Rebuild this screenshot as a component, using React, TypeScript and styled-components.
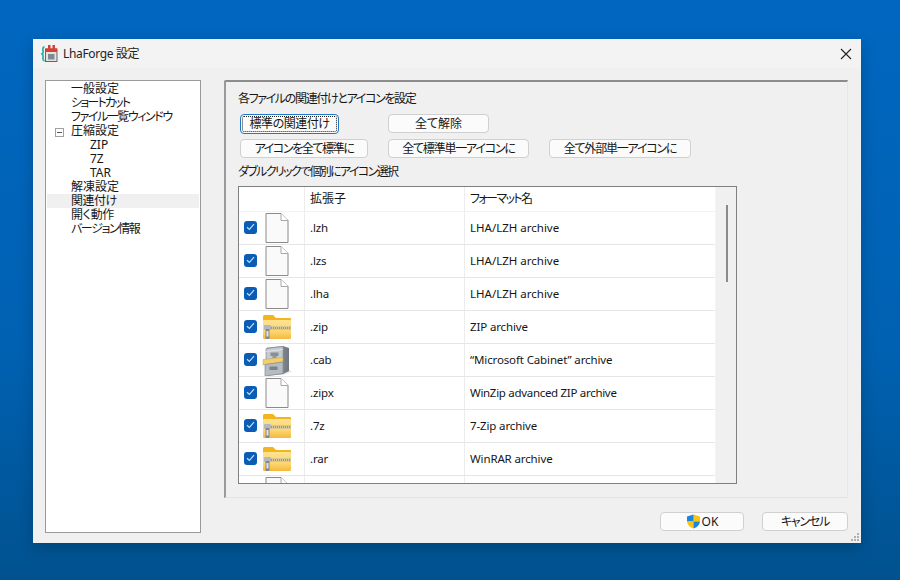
import React from "react";
import styled, { createGlobalStyle } from "styled-components";

const Global = createGlobalStyle`
  html, body { margin: 0; padding: 0; height: 100%; }
  body {
    width: 900px; height: 580px; overflow: hidden;
    font-family: "Noto Sans", "Noto Sans CJK JP", "Liberation Sans", sans-serif;
    font-size: 11px; color: #161616;
    font-feature-settings: "palt";
  }
`;

const Desktop = styled.div`
  width: 900px; height: 580px; box-sizing: border-box; padding: 39px 39px 37px 33px;
  background: linear-gradient(180deg, #0067c0 0%, #0061b2 60%, #00528f 100%);
`;
const WinWrap = styled.div`position: relative; width: 828px; height: 504px;`;
const Win = styled.div`
  width: 828px; height: 504px; background: #f0f0f0; display: flex; flex-direction: column;
  box-shadow: 0 4px 14px rgba(0,0,0,.2);
`;
const TitleBar = styled.div`
  height: 29px; flex: none; background: #f3f3f3; display: flex; align-items: center;
  padding: 0 9px 0 8px; gap: 5px; font-size: 12px;
`;
const TitleText = styled.span`flex: 1; color: #222; line-height: 29px; letter-spacing: -.35px;`;
const CloseBtn = styled.div`width: 12px; height: 12px; display: flex;`;
const Body = styled.div`
  flex: 1; display: flex; padding: 12px 13px 10px 12px; gap: 23px; min-height: 0;
`;
const Tree = styled.ul`
  width: 156px; flex: none; box-sizing: border-box; margin: 0; padding: 1px; list-style: none; background: #fff;
  border: 1px solid #9a9a9a; font-size: 12px;
`;
const TreeItem = styled.li<{ $child?: boolean; $sel?: boolean; $sp?: number }>`
  height: 14px; line-height: 14px; padding-left: ${p => (p.$child ? 43 : 24)}px;
  background: ${p => (p.$sel ? "#f0f0f0" : "transparent")};
  letter-spacing: ${p => p.$sp ?? 0}px;
  position: relative; white-space: nowrap;
`;
const Expander = styled.span`
  position: absolute; left: 8px; top: 4px; width: 7px; height: 7px; border: 1px solid #a0a0a0;
  background: #fff;
  &::after { content: ""; position: absolute; left: 1px; top: 3px; width: 5px; height: 1px; background: #555; }
`;
const Right = styled.div`flex: 1; display: flex; flex-direction: column; min-width: 0;`;
const Panel = styled.div`
  height: 418px; flex: none; box-sizing: border-box; border-top: 2px solid #8c8c8c; border-left: 2px solid #9a9a9a;
  border-right: 1px solid #e6e6e6; border-bottom: 1px solid #e3e3e3; padding: 10px 12px 0 12px;
  display: flex; flex-direction: column; border-radius: 2px 0 0 0;
`;
const Label = styled.div<{ $sp: number }>`
  height: 14px; line-height: 14px; font-size: 12px; white-space: nowrap; letter-spacing: ${p => p.$sp}px;
`;
const BtnGrid = styled.div`
  display: flex; flex-direction: column; gap: 5px; padding: 8px 0 0 2px; margin-bottom: 7px;
`;
const BtnRow = styled.div`display: flex;`;
const Btn = styled.div<{ $w: number; $gap?: number; $focus?: boolean; $sp?: number }>`
  width: ${p => p.$w}px; height: ${p => (p.$focus ? 20 : 19)}px; box-sizing: border-box; margin-left: ${p => p.$gap ?? 0}px;
  background: #fbfbfb; border: 1px solid ${p => (p.$focus ? "#1f78c8" : "#d0d0d0")};
  border-radius: 4px; font-size: 12px; display: flex; align-items: center; justify-content: center; gap: 1px;
  position: relative; white-space: nowrap; line-height: 1; letter-spacing: ${p => p.$sp ?? 0}px;
  ${p => p.$focus ? `&::after { content: ""; position: absolute; inset: 1px; border: 1px dotted #222; border-radius: 2px; }` : ""}
`;
const ListBox = styled.div`
  margin-top: 7px; height: 298px; width: 499px; box-sizing: border-box; background: #fff;
  border: 1px solid #7f7f7f; overflow: hidden; position: relative;
`;
const Row = styled.div<{ $header?: boolean }>`
  display: flex; height: ${p => (p.$header ? 25 : 33)}px; box-sizing: border-box; align-items: center;
  border-bottom: 1px solid ${p => (p.$header ? "#f2f2f2" : "#e6e6e6")};
`;
const IconCell = styled.div`
  width: 66px; flex: none; height: 100%; box-sizing: border-box; padding: 0 0 2px 5px; display: flex; align-items: center;
  border-right: 1px solid #ececec; position: relative; background: #fff;
`;
const ExtCell = styled.div`
  width: 160px; flex: none; height: 100%; box-sizing: border-box; padding: 0 0 2px 5px; display: flex; align-items: center;
  border-right: 1px solid #ececec; font-size: 11.5px; letter-spacing: -.15px;
`;
const NameCell = styled.div<{ $sp?: number; $size?: number }>`
  flex: 1; box-sizing: border-box; padding: 0 0 2px 5px; height: 100%; display: flex; align-items: center;
  font-size: ${p => p.$size ?? 11.5}px; white-space: nowrap; letter-spacing: ${p => p.$sp ?? -0.13}px;
`;
const HeadExt = styled(ExtCell)`font-size: 12px; letter-spacing: 0;`;
const Check = styled.span`
  width: 13px; height: 13px; border-radius: 3px; background: #0a5cb4; flex: none; display: flex;
  align-items: center; justify-content: center;
`;
const CheckGap = styled.span`width: 13px; flex: none;`;
const ScrollTrack = styled.div`
  position: absolute; top: 0; right: 0; bottom: 0; width: 20px; background: #f0f0f0;
  border-left: 1px solid #f4f4f4;
`;
const ScrollThumb = styled.div`
  position: absolute; left: 10px; top: 18px; width: 2px; height: 77px; background: #8a8a8a;
`;
const Footer = styled.div`
  display: flex; justify-content: flex-end; gap: 18px; padding-top: 14px;
`;
const Grip = styled.svg`position: absolute; right: 1px; bottom: 1px;`;
const Slot = styled.span`
  width: 33px; height: 33px; flex: none; margin-left: 3px; padding-top: 2px; box-sizing: border-box;
  display: flex; align-items: center; justify-content: center;
`;

const FileIcon = () => (
  <svg width="24" height="30" viewBox="0 0 24 30">
    <path d="M1 .5H16L23 7.5V29.5H1Z" fill="#fafafa" stroke="#8a8a8a" />
    <path d="M16 .5V7.5H23" fill="#fff" stroke="#a8a8a8" />
  </svg>
);
const FolderIcon = () => (
  <svg width="30" height="26" viewBox="0 0 30 26">
    <defs>
      <linearGradient id="fb" x1="0" y1="0" x2="0" y2="1">
        <stop offset="0" stopColor="#fee28f" />
        <stop offset=".6" stopColor="#fdd671" />
        <stop offset="1" stopColor="#f4b93e" />
      </linearGradient>
    </defs>
    <path d="M1 2.5a1.5 1.5 0 0 1 1.5-1.5H11l3 3H28a1 1 0 0 1 1 1V8H1Z" fill="#f3b420" />
    <rect x="1" y="6" width="28" height="19" rx="1" fill="url(#fb)" />
    <rect x="6" y="12" width="23" height="4" fill="#d9c88f" />
    <path d="M7 14H29" stroke="#8d876f" strokeWidth="1.4" strokeDasharray="1 1" />
    <rect x="2" y="11" width="7" height="5" rx="1" fill="#b4b8bc" />
    <rect x="3.5" y="15" width="4" height="10" rx="1" fill="#83878b" />
    <rect x="4.5" y="17" width="2" height="5.5" fill="#e4e4e4" />
  </svg>
);
const CabIcon = () => (
  <svg width="30" height="31" viewBox="0 0 30 31">
    <defs>
      <linearGradient id="cs" x1="0" y1="0" x2="1" y2="0">
        <stop offset="0" stopColor="#a9afb6" />
        <stop offset="1" stopColor="#6f767d" />
      </linearGradient>
    </defs>
    <path d="M27 25 30 26.5 21 30 14 29Z" fill="#e2e2e2" />
    <path d="M5 2.5 21 1 27 3V26L21 29 5 31Z" fill="url(#cs)" />
    <path d="M4 3.5 21 1.5V14L4 16Z" fill="#c5cad0" stroke="#858c93" strokeWidth=".7" />
    <path d="M4 6.5 21 4.5" stroke="#dfe3e6" />
    <rect x="8.5" y="7.5" width="8" height="3.5" fill="#868e96" />
    <rect x="10.5" y="11.5" width="4" height="1" fill="#666" />
    <path d="M1 14.5 21 12.5 21 17 1 20Z" fill="#f2cf6a" stroke="#b9a25a" strokeWidth=".5" />
    <path d="M3 19.5 21 17V28.5L3 31Z" fill="#b6bcc3" stroke="#858c93" strokeWidth=".7" />
    <rect x="7.5" y="21.5" width="8" height="3.5" fill="#7b838b" />
  </svg>
);
const Shield = () => (
  <svg width="15" height="15" viewBox="0 0 15 15">
    <path d="M7.5 0.5 14 2.5V7.5H7.5Z" fill="#f9c412" />
    <path d="M7.5 0.5 1 2.5V7.5H7.5Z" fill="#1b86dc" />
    <path d="M1 7.5H7.5V14.5C4 13.5 1.5 11 1 7.5Z" fill="#f9c412" />
    <path d="M14 7.5H7.5V14.5C11 13.5 13.5 11 14 7.5Z" fill="#1b86dc" />
  </svg>
);
const AppIcon = () => (
  <svg width="17" height="19" viewBox="0 0 17 19">
    <path d="M3.5 3Q1.5 3 2 6.5T1 10Q2.5 11 2 13.5T3.5 17" fill="none" stroke="#2fb6a8" strokeWidth="1.8" />
    <rect x="4.5" y="5" width="11.5" height="12.5" fill="#e7e3dc" stroke="#444" strokeWidth=".8" />
    <rect x="4.5" y="4.5" width="11.5" height="3.5" fill="#d94033" />
    <rect x="7" y="1" width="2.5" height="4" fill="#d94033" />
    <rect x="11.5" y="1" width="2.5" height="4" fill="#d94033" />
    <rect x="7" y="10" width="6.5" height="5.5" fill="#7d8b96" />
  </svg>
);
const CheckMark = () => (
  <svg width="9" height="8" viewBox="0 0 9 8">
    <path d="M1 4.2 3.4 6.5 8 1.2" fill="none" stroke="#bfe0fb" strokeWidth="1.2" />
  </svg>
);

type RowData = { ext: string; name: string; icon: "file" | "folder" | "cab"; sp?: number };
const rows: RowData[] = [
  { ext: ".lzh", name: "LHA/LZH archive", icon: "file", sp: 0 },
  { ext: ".lzs", name: "LHA/LZH archive", icon: "file", sp: 0 },
  { ext: ".lha", name: "LHA/LZH archive", icon: "file", sp: 0 },
  { ext: ".zip", name: "ZIP archive", icon: "folder" },
  { ext: ".cab", name: "“Microsoft Cabinet” archive", icon: "cab" },
  { ext: ".zipx", name: "WinZip advanced ZIP archive", icon: "file", sp: -0.3 },
  { ext: ".7z", name: "7-Zip archive", icon: "folder" },
  { ext: ".rar", name: "WinRAR archive", icon: "folder" },
];
const tree: { t: string; exp?: boolean; child?: boolean; sel?: boolean; sp?: number }[] = [
  { t: "一般設定" },
  { t: "ショートカット", sp: -1.8 },
  { t: "ファイル一覧ウィンドウ", sp: -1.45 },
  { t: "圧縮設定", exp: true },
  { t: "ZIP", child: true },
  { t: "7Z", child: true },
  { t: "TAR", child: true },
  { t: "解凍設定" },
  { t: "関連付け", sp: -0.5, sel: true },
  { t: "開く動作", sp: -0.3 },
  { t: "バージョン情報", sp: -1.4 },
];
const icons = { file: <FileIcon />, folder: <FolderIcon />, cab: <CabIcon /> };

export default function App() {
  return (
    <Desktop>
      <Global />
      <WinWrap>
        <Win>
          <TitleBar>
            <AppIcon />
            <TitleText>LhaForge 設定</TitleText>
            <CloseBtn>
              <svg width="12" height="12" viewBox="0 0 12 12">
                <path d="M1 1 11 11M11 1 1 11" stroke="#222" strokeWidth="1.1" />
              </svg>
            </CloseBtn>
          </TitleBar>
          <Body>
            <Tree>
              {tree.map(i => (
                <TreeItem key={i.t} $child={i.child} $sel={i.sel} $sp={i.sp}>
                  {i.exp && <Expander />}
                  {i.t}
                </TreeItem>
              ))}
            </Tree>
            <Right>
              <Panel>
                <Label $sp={-1.35}>各ファイルの関連付けとアイコンを設定</Label>
                <BtnGrid>
                  <BtnRow>
                    <Btn $w={99} $focus $sp={-0.5}>標準の関連付け</Btn>
                    <Btn $w={101} $gap={49}>全て解除</Btn>
                  </BtnRow>
                  <BtnRow>
                    <Btn $w={128} $sp={-1.4}>アイコンを全て標準に</Btn>
                    <Btn $w={141} $gap={20} $sp={-1.2}>全て標準単一アイコンに</Btn>
                    <Btn $w={142} $gap={20} $sp={-1.2}>全て外部単一アイコンに</Btn>
                  </BtnRow>
                </BtnGrid>
                <Label $sp={-1.65}>ダブルクリックで個別にアイコン選択</Label>
                <ListBox>
                  <Row $header>
                    <IconCell />
                    <HeadExt>拡張子</HeadExt>
                    <NameCell $sp={-1.6} $size={12}>フォーマット名</NameCell>
                  </Row>
                  {rows.map(r => (
                    <Row key={r.ext}>
                      <IconCell>
                        <Check><CheckMark /></Check>
                        <Slot>{icons[r.icon]}</Slot>
                      </IconCell>
                      <ExtCell>{r.ext}</ExtCell>
                      <NameCell $sp={r.sp}>{r.name}</NameCell>
                    </Row>
                  ))}
                  <Row>
                    <IconCell><CheckGap /><Slot><FileIcon /></Slot></IconCell>
                    <ExtCell />
                    <NameCell />
                  </Row>
                  <ScrollTrack><ScrollThumb /></ScrollTrack>
                </ListBox>
              </Panel>
              <Footer>
                <Btn $w={84}><Shield />OK</Btn>
                <Btn $w={86} $sp={-1.2}>キャンセル</Btn>
              </Footer>
            </Right>
          </Body>
        </Win>
        <Grip width="10" height="10" viewBox="0 0 10 10">
          <g fill="#b0b0b0">
            <rect x="7" y="1" width="2" height="2" />
            <rect x="4" y="4" width="2" height="2" /><rect x="7" y="4" width="2" height="2" />
            <rect x="1" y="7" width="2" height="2" /><rect x="4" y="7" width="2" height="2" /><rect x="7" y="7" width="2" height="2" />
          </g>
        </Grip>
      </WinWrap>
    </Desktop>
  );
}
